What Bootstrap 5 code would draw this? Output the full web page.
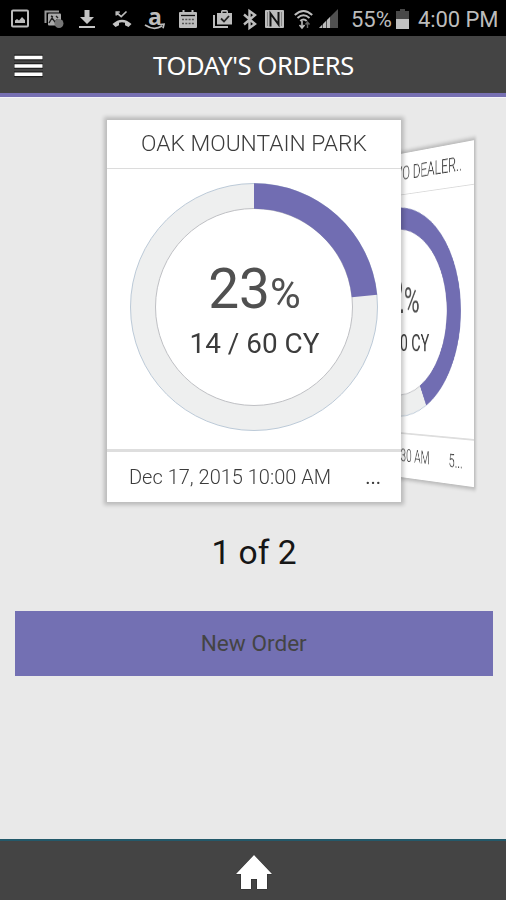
<!DOCTYPE html>
<html lang="en">
<head>
<meta charset="utf-8">
<meta name="viewport" content="width=device-width, initial-scale=1">
<title>Today's Orders</title>
<link href="https://cdn.jsdelivr.net/npm/bootstrap@5.3.0/dist/css/bootstrap.min.css" rel="stylesheet">
<style>
  body { font-family: Roboto, "Liberation Sans", sans-serif; background: #e9e9e9; color: #3c3c3c; height: 900px; overflow: hidden; }
  svg { display: block; overflow: visible; }
  .status-bar { height: 36px; background: #000; color: #bcbcbc; display: grid; align-items: center; padding-left: 11px;
    grid-template-columns: 33px 35px 33px 33px 34px 34px 30px 22px 29px 25px 32px 45px 22px auto; font-size: 22px; line-height: 36px; white-space: nowrap; }
  .status-bar span { padding-top: 2px; }
  .clock { font-size: 22px; letter-spacing: -.1px; }
  .brand-a { display: grid; justify-items: center; width: 20px; height: 36px; font: 700 23px/31px "Open Sans", sans-serif; }
  .brand-a > * { grid-area: 1 / 1; }
  .brand-a svg { align-self: start; margin-top: 21px; }
  .app-bar { height: 61px; background: #444; border-bottom: 4px solid #7770b3; box-shadow: 0 1px 0 #f4f3f9; }
  .menu-btn { width: 56px; padding: 2px 0 0 14px; border: 0; background: none; }
  .app-title { font-family: "Noto Sans", "Open Sans", sans-serif; font-size: 25.5px; line-height: 56px; color: #fff; letter-spacing: -.35px; padding: 1px 55px 0 0; }
  .deck { display: grid; width: 294px; height: 382px; margin: 23px 0 0 107px; }
  .order { grid-area: 1 / 1; width: 294px; height: 382px; background: #fff; box-shadow: 0 0 4px 3px rgba(0,0,0,.2); z-index: 2; }
  .order-next { z-index: 1; transform-origin: 0 0;
    transform: matrix3d(.4131,-.1298,0,-.00059, 0,1,0,0, 0,0,1,0, 282.6,60.4,0,1.2745); }
  .order-name { height: 49px; line-height: 47px; border-bottom: 1.5px solid #dcdcdc; font-size: 22.8px; font-weight: 300; padding: 0 21px; }
  .dial { display: grid; place-items: center; height: 280px; padding-right: 1px; padding-bottom: 5px; }
  .dial > * { grid-area: 1 / 1; }
  .readout { padding: 13px 0 0 2px; }
  .percent { font-size: 55px; line-height: 56px; color: #505050; }
  .percent small { font-size: 42px; font-weight: 400; }
  .volume { font-size: 27.9px; line-height: 44px; }
  .order-foot { height: 53px; line-height: 51px; border-top: 3px solid #dedede; font-size: 20px; font-weight: 300; padding: 0 20px 0 22px; box-sizing: border-box; }
  .order-next .order-foot { border-top-width: 2px; }
  .pager { font-size: 33.6px; line-height: 44px; margin-top: 29px; color: #161616; padding-left: 2px; }
  .new-order, .new-order:hover { height: 64.500px; margin: 36px 13px 0 14.500px; padding-top: 8px; border: 0; border-radius: 0; background: #7370b3; color: #444; font-size: 22.6px; }
  .tab-bar { height: 61px; background: #444; border-top: 2px solid #23596a; padding: 3px 0 0 1px; }
</style>
</head>
<body class="d-flex flex-column">

<div class="status-bar">
  <svg width="18" height="19" viewBox="0 0 18 19"><rect x="1" y=".5" width="16" height="16" rx="1" fill="none" stroke="#bcbcbc" stroke-width="2"/><path d="M4 13V10.500l2-1.500 2 1.500 3-3.500 3 3V13z" fill="#bcbcbc"/></svg>
  <svg width="20" height="19" viewBox="0 0 20 19"><path d="M1.5 13V1.5H15" fill="none" stroke="#999" stroke-width="2"/><rect x="4" y="3.5" width="13" height="12" rx="1" fill="#aaa"/><path d="M5 13l3-5 3 4 2-2 3 2M7 6l2 1m3-1 2 2" stroke="#222" stroke-width="1.4" fill="none"/><circle cx="15" cy="13.5" r="4.5" fill="#777"/></svg>
  <svg width="16" height="18" viewBox="0 0 16 18"><path d="M5.5 0h5v7H15L8 14 1 7h4.500zM0 16h16v2H0z" fill="#c4c4c4"/></svg>
  <svg width="20" height="18" viewBox="0 0 20 18"><path d="M4.500 2.500l4.700 4.200L14.500 1.500M4.300 5.500V2h3.500" fill="none" stroke="#bcbcbc" stroke-width="1.7"/><path d="M.5 14Q10 5.500 19.500 14L16.500 17l-3.500-1.800v-2.400q-3-.9-6 0v2.400L3.500 17z" fill="#c4c4c4"/></svg>
  <div class="brand-a"><div>a</div><svg width="20" height="8" viewBox="0 0 20 8"><path d="M0 3q9 6 17 1M14.500 2.500l4.500-.3-1 4" fill="none" stroke="#bcbcbc" stroke-width="1.7"/></svg></div>
  <svg width="18" height="18" viewBox="0 0 18 18"><path d="M1 2h2.500V0h2v2h7V0h2v2H17q1 0 1 1v14q0 1-1 1H1q-1 0-1-1V3q0-1 1-1z" fill="#bcbcbc"/><path d="M2 5.500h14" stroke="#111" stroke-width="1.3"/><path d="M3 9.500h12M3 13.500h12" stroke="#555" stroke-width="1.3" stroke-dasharray="2 1.300"/></svg>
  <svg width="20" height="18" viewBox="0 0 20 18"><path d="M1 5v12h14" fill="none" stroke="#bcbcbc" stroke-width="2"/><path d="M4 3h4V1.500Q8 0 9.500 0h4Q15 0 15 1.500V3h4v11.500H4z" fill="#bcbcbc"/><path d="M9.500 1.700h4V3h-4z" fill="#111"/><path d="M8 8.500l3 3 5-5.500" stroke="#222" stroke-width="1.8" fill="none"/></svg>
  <svg width="14" height="19" viewBox="0 0 14 19"><path d="M1 4.500l11 9.500-5.500 4V1L12 5 1 14.500" fill="none" stroke="#bcbcbc" stroke-width="2.4"/></svg>
  <svg width="19" height="19" viewBox="0 0 19 19"><rect width="19" height="18" rx="1" fill="#bcbcbc"/><path d="M5.500 16.500V3.500l8 11V2" fill="none" stroke="#111" stroke-width="2"/><path d="M2.500 2v14M16.500 2v14" stroke="#777" stroke-width=".8"/></svg>
  <svg width="19" height="20" viewBox="0 0 19 20"><path d="M.8 6Q9.500-2 18.200 6M3.500 9q6-5.500 12 0M6.300 12q3.200-3 6.400 0" fill="none" stroke="#bcbcbc" stroke-width="2"/><path d="M8 12v7M5.500 16l2.500 3 2.500-3" fill="none" stroke="#bcbcbc" stroke-width="1.6"/><path d="M13.500 19v-6m-2 2.500 2-2.500 2 2.500" fill="none" stroke="#666" stroke-width="1.4"/></svg>
  <svg width="20" height="20" viewBox="0 0 20 20"><path d="M19 0v19H0z" fill="#505050"/><path d="M0 19h3v-3zM4 19h3v-7l-3 3zM8 19h3V8l-3 3z" fill="#bcbcbc"/></svg>
  <span>55%</span>
  <svg width="13" height="20" viewBox="0 0 13 20"><path d="M0 2h4V0h5v2h4v9H0z" fill="#484848"/><path d="M0 10h13v10H0z" fill="#c0c0c0"/></svg>
  <span class="clock">4:00 PM</span>
</div>

<header class="app-bar d-flex align-items-center">
  <button class="menu-btn" aria-label="Menu">
    <svg width="30" height="24" viewBox="0 0 30 24"><path d="M0 3.500h29M0 12h29M0 20.300h29" stroke="#222" stroke-width="6"/><path d="M.5 3.500h28M.5 12h28M.5 20.300h28" stroke="#fff" stroke-width="3.600"/></svg>
  </button>
  <div class="app-title flex-grow-1 text-center">TODAY'S ORDERS</div>
</header>

<main class="flex-grow-1">
  <div class="deck">
    <article class="order">
      <div class="order-name text-center">OAK MOUNTAIN PARK</div>
      <div class="dial">
        <svg width="248" height="248" viewBox="0 0 248 248"><circle cx="124" cy="124" r="111" fill="none" stroke="#eeefef" stroke-width="25"/><circle cx="124" cy="124" r="123.500" fill="none" stroke="#bccad8"/><circle cx="124" cy="124" r="98.500" fill="none" stroke="#bfc0c4"/><circle cx="124" cy="124" r="111" fill="none" stroke="#716db2" stroke-width="25.500" pathLength="100" stroke-dasharray="23.400 100" transform="rotate(-90 124 124)"/></svg>
        <div class="readout text-center"><div class="percent">23<small>%</small></div><div class="volume">14 / 60 CY</div></div>
      </div>
      <div class="order-foot d-flex justify-content-between"><span>Dec 17, 2015 10:00 AM</span><span class="fw-normal">...</span></div>
    </article>
    <article class="order order-next">
      <div class="order-name text-end">VOLVO DEALER..</div>
      <div class="dial">
        <svg width="248" height="248" viewBox="0 0 248 248"><circle cx="124" cy="124" r="111" fill="none" stroke="#eeefef" stroke-width="25"/><circle cx="124" cy="124" r="123.500" fill="none" stroke="#bccad8"/><circle cx="124" cy="124" r="98.500" fill="none" stroke="#bfc0c4"/><circle cx="124" cy="124" r="111" fill="none" stroke="#716db2" stroke-width="25.500" pathLength="100" stroke-dasharray="42 100" transform="rotate(-90 124 124)"/></svg>
        <div class="readout text-center"><div class="percent">42<small>%</small></div><div class="volume">25 / 60 CY</div></div>
      </div>
      <div class="order-foot d-flex justify-content-between"><span>Dec 17, 2015 7:30 AM</span><span>5...</span></div>
    </article>
  </div>
  <div class="pager text-center">1 of 2</div>
  <div class="d-grid"><button class="btn new-order">New Order</button></div>
</main>

<nav class="tab-bar d-flex justify-content-center align-items-center">
  <svg width="36" height="36" viewBox="0 0 36 36"><path d="M18 1L0 20h5v15h10V25h6v10h10V20h5z" fill="#fff" stroke="#2c2c2c" stroke-width="1" paint-order="stroke"/></svg>
</nav>

<script src="https://cdn.jsdelivr.net/npm/bootstrap@5.3.0/dist/js/bootstrap.bundle.min.js"></script>
</body>
</html>
